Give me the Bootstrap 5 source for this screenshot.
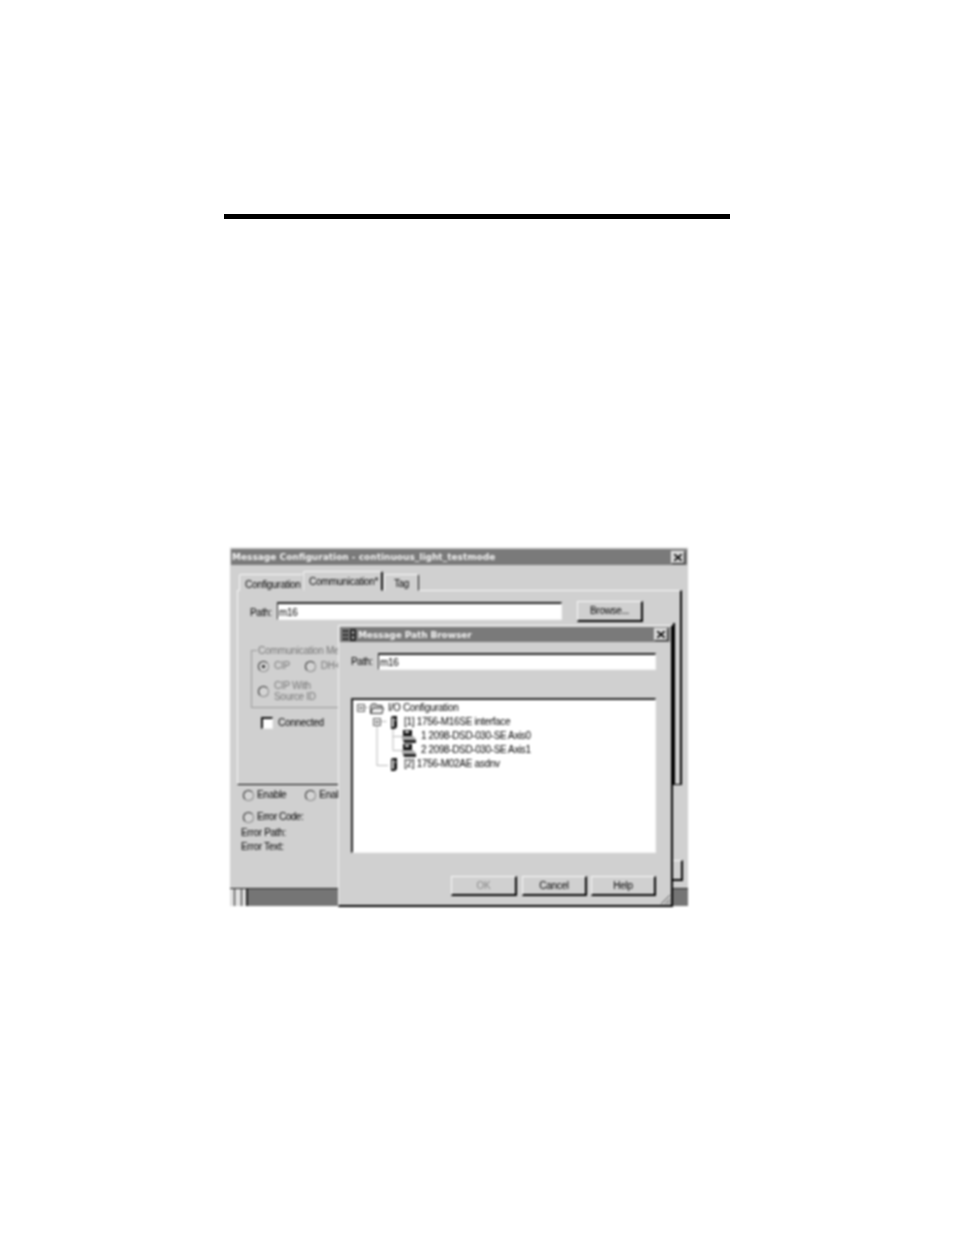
<!DOCTYPE html>
<html lang="en">
<head>
<meta charset="utf-8">
<title>Message Path Browser</title>
<link href="https://cdn.jsdelivr.net/npm/bootstrap@5.3.0/dist/css/bootstrap.min.css" rel="stylesheet">
<style>
html,body{height:1235px;overflow:hidden;background:#fff}
body{font-family:"Liberation Sans",Arial,sans-serif;font-size:10px;letter-spacing:-.3px;color:#000;line-height:14px}
.top-rule{margin:214px 0 0 224px;width:506px;height:5px;background:#000}
.shot{position:relative;margin:328px 0 0 230px;width:458px;height:359px;background:#d0d0d0;border-top:1px solid #eee;filter:blur(.8px)}
.win-main{height:100%}
.title-bar{background:#7a7a7a;color:#f4f4f4;font-family:"DejaVu Sans",sans-serif;font-weight:700;font-size:9px;letter-spacing:0;height:16px;margin:1px 1px 0;padding-left:1px}
.x-btn{width:14px;height:13px;background:#d4d4d4;border:1px solid;border-color:#eee #222 #222 #eee;color:#000;margin-right:2px}
.tab-row{height:20px;padding-left:9px;margin-top:6px}
.w-tab{background:#d0d0d0;border:1px solid;border-color:#f8f8f8 #111 transparent #f8f8f8;border-radius:2px 2px 0 0;height:17px;padding:2px 5px 0;text-align:center;position:relative}
.w-tab.on{height:20px;border-right-width:2px;padding-top:3px;z-index:1;margin-top:-2px;background:#d0d0d0}
.w-tab.one{width:64px;border-right-color:#bbb;padding-top:3px}.w-tab.two{width:80px}.w-tab.three{width:35px;margin-left:1px}
.w-panel{margin:-1px 6px 0 7px;height:195px;border:1px solid;border-color:#f8f8f8 #000 #000 #f8f8f8;border-right-width:2px;padding:10px 0 0 12px}
.w-field{background:#fff;border:1px solid;border-color:#222 #f4f4f4 #f4f4f4 #222;border-top-width:2px;border-radius:0;height:18px;padding:0 1px;font-size:10px;letter-spacing:-.3px;line-height:14px;color:#000;box-shadow:none}
.w-field:focus{background:#fff;border-color:#222 #f4f4f4 #f4f4f4 #222;box-shadow:none}
.main-path{width:285px;margin-left:6px;margin-top:1px;padding-top:1px}
.path-label{width:21px}
.main-label{margin-top:5px}
.w-btn{background:#d0d0d0;border:1px solid;border-color:#fafafa #000 #000 #fafafa;border-width:1px 2px 2px 1px;border-radius:0;width:66px;height:21px;padding:0;font-size:10px;letter-spacing:-.3px;line-height:15px;color:#000}
.w-btn:disabled{background:#d0d0d0;color:#888;border-color:#fafafa #000 #000 #fafafa;opacity:1}
.browse{margin-left:15px;padding-bottom:2px}
.group-box{position:relative;width:200px;height:58px;margin:28px 0 0 1px;border:1px solid #999;color:#777;padding:8px 0 0 6px}
.group-cap{position:absolute;left:5px;top:-7px;background:#d0d0d0;padding:0 1px}
.radio-dot{width:11px;height:11px;border-radius:50%;background:#d4d4d4;border:1px solid;border-color:#222 #888 #888 #222;flex:none;display:inline-block}
.radio-dot.set{background:radial-gradient(circle,#444 25%,#ddd 35%)}
.radio-pair{gap:5px}
.radio-two{margin-left:15px}
.cip-source{margin-top:7px;line-height:11px}
.check-row{margin:8px 0 0 11px;gap:5px}
.check-box{width:12px;height:12px;background:#fff;border:1px solid;border-color:#111 #eee #eee #111;border-width:2px 1px 1px 2px}
.status{padding:3px 0 0 11px;color:#000}
.status-row{gap:3px;height:14px;margin-left:2px}
.status-two{margin-left:16px}
.err-code{margin-top:8px}
.err-path{margin-top:2px}
.err-narrow{letter-spacing:-.5px}
.strip{position:absolute;left:0;right:0;bottom:0;height:18px;background:#757575;border-top:1px solid #222}
.strip i{position:absolute;top:0;bottom:0;width:1px;background:#222}
.strip .bar-a{left:4px}.strip .bar-b{left:11px}.strip .bar-d{left:16px;width:2px}
.strip-lines{position:absolute;left:0;top:0;width:17px;height:100%;background:#e0e0e0}
.rem-btn{position:absolute;left:420px;top:312px;width:33px;height:21px;border:1px solid;border-color:#fafafa #000 #000 #fafafa;border-width:1px 2px 2px 1px;background:#d0d0d0}
.back-line{position:absolute;left:443px;top:75px;height:161px;width:2px;background:#000}
.win-browser{position:absolute;left:108px;top:77px;width:335px;height:282px;background:#d0d0d0;border:1px solid;border-color:#f4f4f4 #000 #000 #f4f4f4;border-width:1px 2px 2px 1px}
.win-browser .title-bar{height:15px;margin:1px 1px 0;padding-left:0}
.b-title{letter-spacing:-.1px}
.b-icon{margin:0 2px 0 3px;flex:none}
.b-body{padding:11px 15px 0 12px}
.browser-path{width:278px;height:17px;margin-left:6px}
.tree-box{position:relative;background:#fff;height:155px;margin-top:28px;border:1px solid;border-color:#222 #f4f4f4 #f4f4f4 #222;border-width:2px 1px 1px 2px;padding:0;color:#000}
.tree-lines{position:absolute;left:0;top:0}
.tree-list{padding-top:1px}
.tree-row{position:relative;height:14px;line-height:14px;gap:4px;white-space:nowrap}
.lvl1{padding-left:36px}.lvl2{padding-left:49px;letter-spacing:-.38px}
.lvl1 .t-name{margin-left:1px}
.b-foot{margin-top:23px;justify-content:flex-end}
.b-foot .w-btn{width:65px;height:20px;margin-left:4px}
.b-foot .w-btn.first{width:66px}
.b-foot .cancel{margin-left:5px}
.grip{position:absolute;right:0;bottom:0}
</style>
</head>
<body>
<div class="top-rule"></div>
<div class="shot">
  <div class="win-main d-flex flex-column">
    <div class="title-bar d-flex align-items-center justify-content-between">
      <span>Message Configuration - continuous_light_testmode</span>
      <span class="x-btn d-flex align-items-center justify-content-center"><svg width="8" height="7" viewBox="0 0 8 7"><path d="M0 0L8 7M8 0L0 7" stroke="#000" stroke-width="1.6"/></svg></span>
    </div>
    <div class="tab-row d-flex align-items-end">
      <div class="w-tab one">Configuration</div>
      <div class="w-tab two on">Communication*</div>
      <div class="w-tab three">Tag</div>
    </div>
    <div class="w-panel">
      <div class="d-flex align-items-start">
        <span class="path-label main-label">Path:</span>
        <input class="form-control w-field main-path" value="m16" aria-label="Path">
        <button type="button" class="btn w-btn browse">Browse...</button>
      </div>
      <div class="group-box">
        <span class="group-cap">Communication Method</span>
        <div class="d-flex align-items-center">
          <span class="d-flex align-items-center radio-pair"><span class="radio-dot set"></span>CIP</span>
          <span class="d-flex align-items-center radio-pair radio-two"><span class="radio-dot"></span>DH+</span>
        </div>
        <div class="d-flex align-items-center radio-pair cip-source"><span class="radio-dot"></span><span>CIP With<br>Source ID</span></div>
      </div>
      <div class="d-flex align-items-center check-row"><span class="check-box"></span><span>Connected</span></div>
    </div>
    <div class="status">
      <div class="d-flex align-items-center status-row">
        <span class="radio-dot"></span><span>Enable</span>
        <span class="radio-dot status-two"></span><span>Enable Waiting</span>
      </div>
      <div class="d-flex align-items-center status-row err-code"><span class="radio-dot"></span><span class="err-narrow">Error Code:</span></div>
      <div class="err-path">Error Path:</div>
      <div>Error Text:</div>
    </div>
  </div>
  <div class="strip"><span class="strip-lines"></span><i class="bar-a"></i><i class="bar-b"></i><i class="bar-d"></i></div>
  <div class="rem-btn"></div>
  <div class="back-line"></div>

  <div class="win-browser">
    <div class="title-bar d-flex align-items-center justify-content-between">
      <span class="d-flex align-items-center b-title">
        <svg class="b-icon" width="13" height="12" viewBox="0 0 13 12"><path d="M0 1h2v2H0zM3 1h2v2H3zM0 5h2v2H0zM3 5h2v2H3zM0 9h2v2H0zM3 9h2v2H3z" fill="#111"/><path d="M7 0h6v12H7z" fill="#222"/><path d="M9 2h2v3H9zM9 7h2v3H9z" fill="#bbb"/></svg>
        Message Path Browser
      </span>
      <span class="x-btn d-flex align-items-center justify-content-center"><svg width="8" height="7" viewBox="0 0 8 7"><path d="M0 0L8 7M8 0L0 7" stroke="#000" stroke-width="1.6"/></svg></span>
    </div>
    <div class="b-body">
      <div class="d-flex align-items-center">
        <span class="path-label">Path:</span>
        <input class="form-control w-field browser-path" value="m16" aria-label="Path">
      </div>
      <div class="tree-box">
        <svg class="tree-lines" width="120" height="80" viewBox="0 0 120 80">
          <g stroke="#777" stroke-width="1" stroke-dasharray="1 1" fill="none">
            <path d="M10 7.500H16M26 21.500H34M24 26V65.500H35M40 28V50.500H50M40 36.500H50"/>
          </g>
          <g fill="#eee" stroke="#666"><rect x="4.500" y="4.500" width="7" height="7"/><rect x="20.500" y="18.500" width="7" height="7"/></g>
          <path d="M6 8H10M22 22H26" stroke="#222"/>
        </svg>
        <div class="tree-list">
          <div class="tree-row d-flex align-items-center">
            <svg class="ms-3" width="15" height="11" viewBox="0 0 15 11"><path d="M1.500 10.500V2.500L3 1H7L8 2.500H13V10.500Z" fill="#ccc" stroke="#333"/><path d="M1.500 10.500L4 5H14.500L13 10.500Z" fill="#eee" stroke="#333"/></svg>
            <span>I/O Configuration</span>
          </div>
          <div class="tree-row d-flex align-items-center lvl1">
            <svg width="10" height="13" viewBox="0 0 10 13"><path d="M2 1L4 0H8V11L6 13H2Z" fill="#111"/><path d="M3 2H5V11H3Z" fill="#ddd"/><path d="M6 3H7V5H6Z" fill="#ccc"/></svg>
            <span class="t-name">[1] 1756-M16SE interface</span>
          </div>
          <div class="tree-row d-flex align-items-center lvl2">
            <svg width="15" height="13" viewBox="0 0 15 13"><path d="M1 0H10V6H1Z" fill="#111"/><path d="M3 1H7V3H3Z" fill="#ddd"/><path d="M0 6H11L14 9V11H2L0 9Z" fill="#aaa"/><path d="M1 10H14V13H2Z" fill="#222"/></svg>
            <span>1 2098-DSD-030-SE Axis0</span>
          </div>
          <div class="tree-row d-flex align-items-center lvl2">
            <svg width="15" height="13" viewBox="0 0 15 13"><path d="M1 0H10V6H1Z" fill="#111"/><path d="M3 1H7V3H3Z" fill="#ddd"/><path d="M0 6H11L14 9V11H2L0 9Z" fill="#aaa"/><path d="M1 10H14V13H2Z" fill="#222"/></svg>
            <span>2 2098-DSD-030-SE Axis1</span>
          </div>
          <div class="tree-row d-flex align-items-center lvl1">
            <svg width="10" height="13" viewBox="0 0 10 13"><path d="M2 1L4 0H8V11L6 13H2Z" fill="#111"/><path d="M3 2H5V11H3Z" fill="#ddd"/><path d="M6 3H7V5H6Z" fill="#ccc"/></svg>
            <span class="t-name">[2] 1756-M02AE asdnv</span>
          </div>
        </div>
      </div>
      <div class="d-flex b-foot">
        <button type="button" class="btn w-btn first" disabled>OK</button>
        <button type="button" class="btn w-btn cancel">Cancel</button>
        <button type="button" class="btn w-btn">Help</button>
      </div>
    </div>
    <svg class="grip" width="12" height="12" viewBox="0 0 12 12"><path d="M11 2L2 11M11 6L6 11M11 9L9 11" stroke="#555" fill="none"/></svg>
  </div>
</div>
<script src="https://cdn.jsdelivr.net/npm/bootstrap@5.3.0/dist/js/bootstrap.bundle.min.js"></script>
</body>
</html>
